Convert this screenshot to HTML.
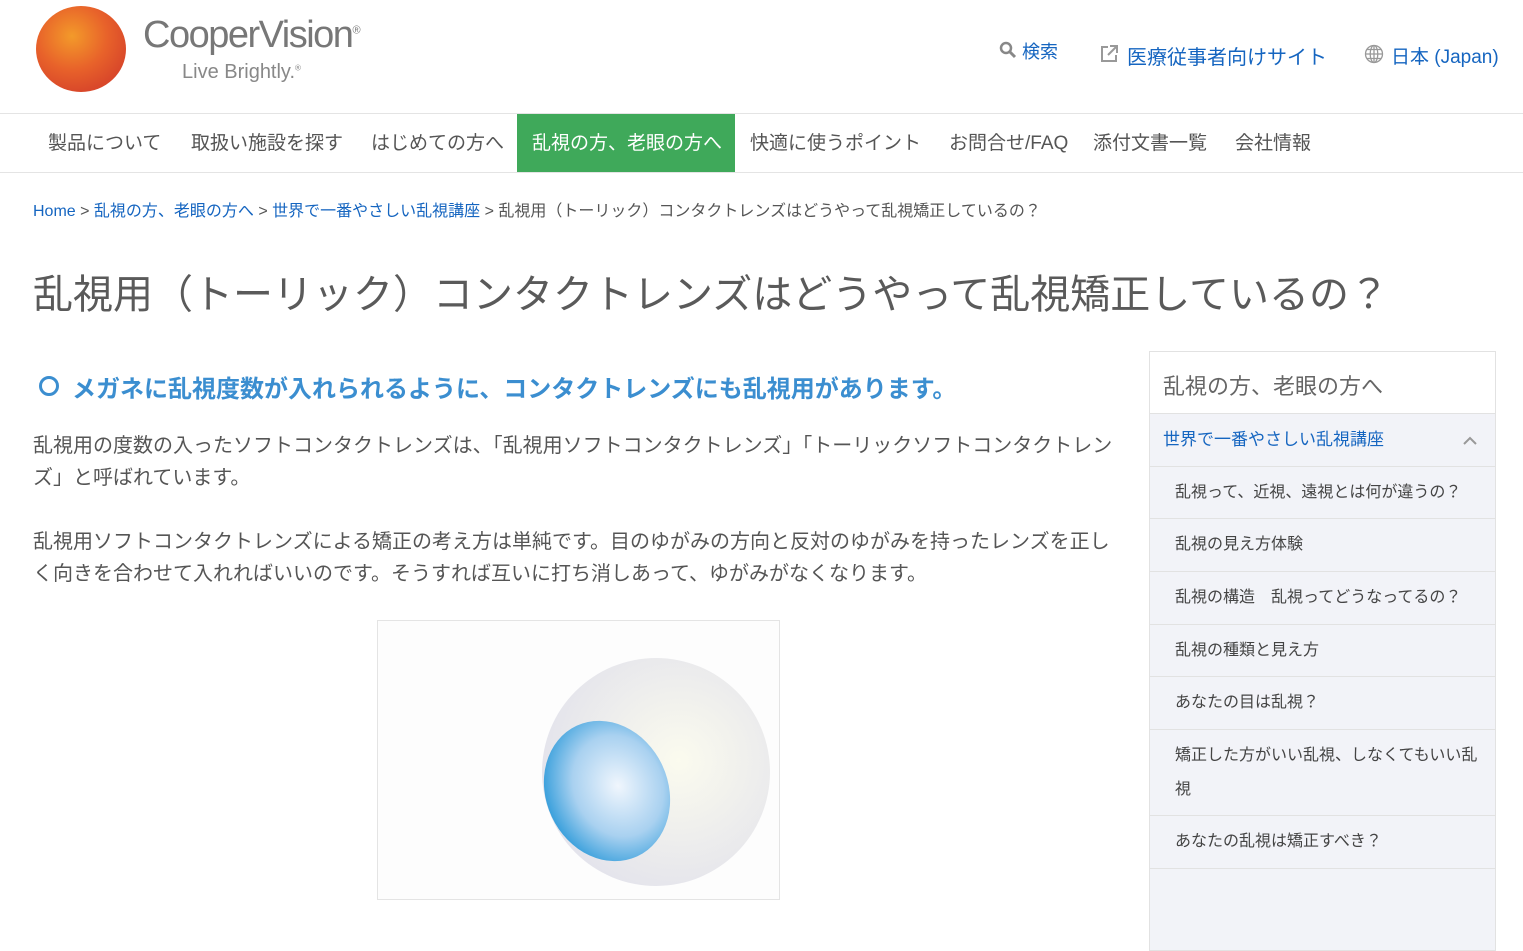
<!DOCTYPE html>
<html><head><meta charset="utf-8"><style>
*{margin:0;padding:0;box-sizing:border-box}
body{width:1523px;height:888px;overflow:hidden;background:#fff;font-family:"Liberation Sans","Noto Sans CJK JP",sans-serif;color:#555;position:relative}
.abs{position:absolute;white-space:nowrap}
a{color:#1565c0;text-decoration:none}
.nav{position:absolute;top:113px;left:0;width:1523px;height:60px;border-top:1px solid #e4e4e4;border-bottom:1px solid #e4e4e4}
.nav span{position:absolute;top:0;height:58px;line-height:60px;font-size:19px;color:#555}
.side{position:absolute;left:1149px;top:351px;width:347px;height:600px;border:1px solid #e2e2e2;background:#f2f3f8}
.side .t{height:62px;background:#fff;border-bottom:1px solid #e2e2e2;font-size:22px;line-height:70px;padding-left:13px;color:#666}
.side .r{border-bottom:1px solid #e2e2e2;height:52.7px;line-height:52px;font-size:16px;padding-left:25px;color:#444}
</style></head><body>
<svg class="abs" style="left:34px;top:4px" width="94" height="88"><defs><radialGradient id="o" cx="40%" cy="35%" r="65%"><stop offset="0" stop-color="#f39a2a"/><stop offset=".6" stop-color="#e8622a"/><stop offset="1" stop-color="#d9482a"/></radialGradient></defs><ellipse cx="47" cy="45" rx="45" ry="43" fill="url(#o)"/></svg>
<div class="abs" style="left:143px;top:14px;font-size:38px;color:#777;letter-spacing:-1.5px">CooperVision<sup style="font-size:11px">®</sup></div>
<div class="abs" style="left:182px;top:61px;font-size:20px;color:#888">Live Brightly.<sup style="font-size:8px">®</sup></div>
<svg class="abs" style="left:999px;top:41px" width="18" height="18"><circle cx="7" cy="7" r="5" fill="none" stroke="#888" stroke-width="2.5"/><line x1="10.5" y1="10.5" x2="16" y2="16" stroke="#888" stroke-width="3"/></svg>
<div class="abs" style="left:1022px;top:38px;font-size:18px;color:#1565c0">検索</div>
<svg class="abs" style="left:1099px;top:44px" width="20" height="20"><path d="M9 3H3v14h14v-6" fill="none" stroke="#999" stroke-width="2"/><path d="M11 2h7v7M18 2l-9 9" fill="none" stroke="#999" stroke-width="2"/></svg>
<div class="abs" style="left:1127px;top:41px;font-size:20px;color:#1565c0">医療従事者向けサイト</div>
<svg class="abs" style="left:1364px;top:44px" width="20" height="20"><g fill="none" stroke="#999" stroke-width="1.3"><circle cx="10" cy="10" r="8.5"/><ellipse cx="10" cy="10" rx="3.8" ry="8.5"/><path d="M1.5 10h17M3 5.5h14M3 14.5h14M10 1.5v17"/></g></svg>
<div class="abs" style="left:1391px;top:42px;font-size:19px;color:#1565c0">日本 (Japan)</div>
<div class="nav">
<span style="left:48px">製品について</span>
<span style="left:191px">取扱い施設を探す</span>
<span style="left:371px">はじめての方へ</span>
<span style="left:517px;width:218px;background:#3fa95a;color:#fff;padding-left:15px">乱視の方、老眼の方へ</span>
<span style="left:750px">快適に使うポイント</span>
<span style="left:949px">お問合せ/FAQ</span>
<span style="left:1093px">添付文書一覧</span>
<span style="left:1235px">会社情報</span>
</div>
<div class="abs" style="left:33px;top:197px;font-size:16px;color:#555"><a>Home</a> &gt; <a>乱視の方、老眼の方へ</a> &gt; <a>世界で一番やさしい乱視講座</a> &gt; 乱視用（トーリック）コンタクトレンズはどうやって乱視矯正しているの？</div>
<div class="abs" style="left:33px;top:262px;font-size:40px;color:#5a5a5a">乱視用（トーリック）コンタクトレンズはどうやって乱視矯正しているの？</div>
<svg class="abs" style="left:38px;top:375px" width="22" height="22"><circle cx="11" cy="11" r="8.5" fill="none" stroke="#3b8ed0" stroke-width="3"/></svg>
<div class="abs" style="left:72px;top:369px;font-size:24px;font-weight:bold;color:#3b8ed0">メガネに乱視度数が入れられるように、コンタクトレンズにも乱視用があります。</div>
<div style="position:absolute;left:33px;top:430px;width:1085px;font-size:20px;line-height:32px;color:#555">乱視用の度数の入ったソフトコンタクトレンズは、「乱視用ソフトコンタクトレンズ」「トーリックソフトコンタクトレンズ」と呼ばれています。<br><br style="line-height:30px">乱視用ソフトコンタクトレンズによる矯正の考え方は単純です。目のゆがみの方向と反対のゆがみを持ったレンズを正しく向きを合わせて入れればいいのです。そうすれば互いに打ち消しあって、ゆがみがなくなります。</div>
<div style="position:absolute;left:377px;top:620px;width:403px;height:280px;border:1px solid #e4e4e4;background:#fdfdfd">
<svg width="401" height="280"><defs><radialGradient id="g" cx="60%" cy="45%" r="60%"><stop offset="0" stop-color="#fbfbee"/><stop offset="1" stop-color="#e4e4ec"/></radialGradient><radialGradient id="b" cx="60%" cy="50%" r="60%"><stop offset="0" stop-color="#f0f6fd"/><stop offset=".6" stop-color="#a9d1f0"/><stop offset="1" stop-color="#3aa0dc"/></radialGradient></defs>
<circle cx="278" cy="151" r="114" fill="url(#g)"/>
<ellipse cx="229" cy="170" rx="61" ry="72" transform="rotate(-25 229 170)" fill="url(#b)"/></svg></div>
<div class="side">
<div class="t">乱視の方、老眼の方へ</div>
<div class="r" style="padding-left:13px;color:#1565c0;font-size:17px">世界で一番やさしい乱視講座<svg style="float:right;margin:22px 18px 0 0" width="14" height="9"><path d="M1 8l6-6 6 6" fill="none" stroke="#999" stroke-width="2"/></svg></div>
<div class="r">乱視って、近視、遠視とは何が違うの？</div>
<div class="r">乱視の見え方体験</div>
<div class="r">乱視の構造　乱視ってどうなってるの？</div>
<div class="r">乱視の種類と見え方</div>
<div class="r">あなたの目は乱視？</div>
<div class="r" style="height:86px;line-height:34px;padding-top:9px;white-space:normal;padding-right:10px">矯正した方がいい乱視、しなくてもいい乱視</div>
<div class="r">あなたの乱視は矯正すべき？</div>
</div>
</body></html>
